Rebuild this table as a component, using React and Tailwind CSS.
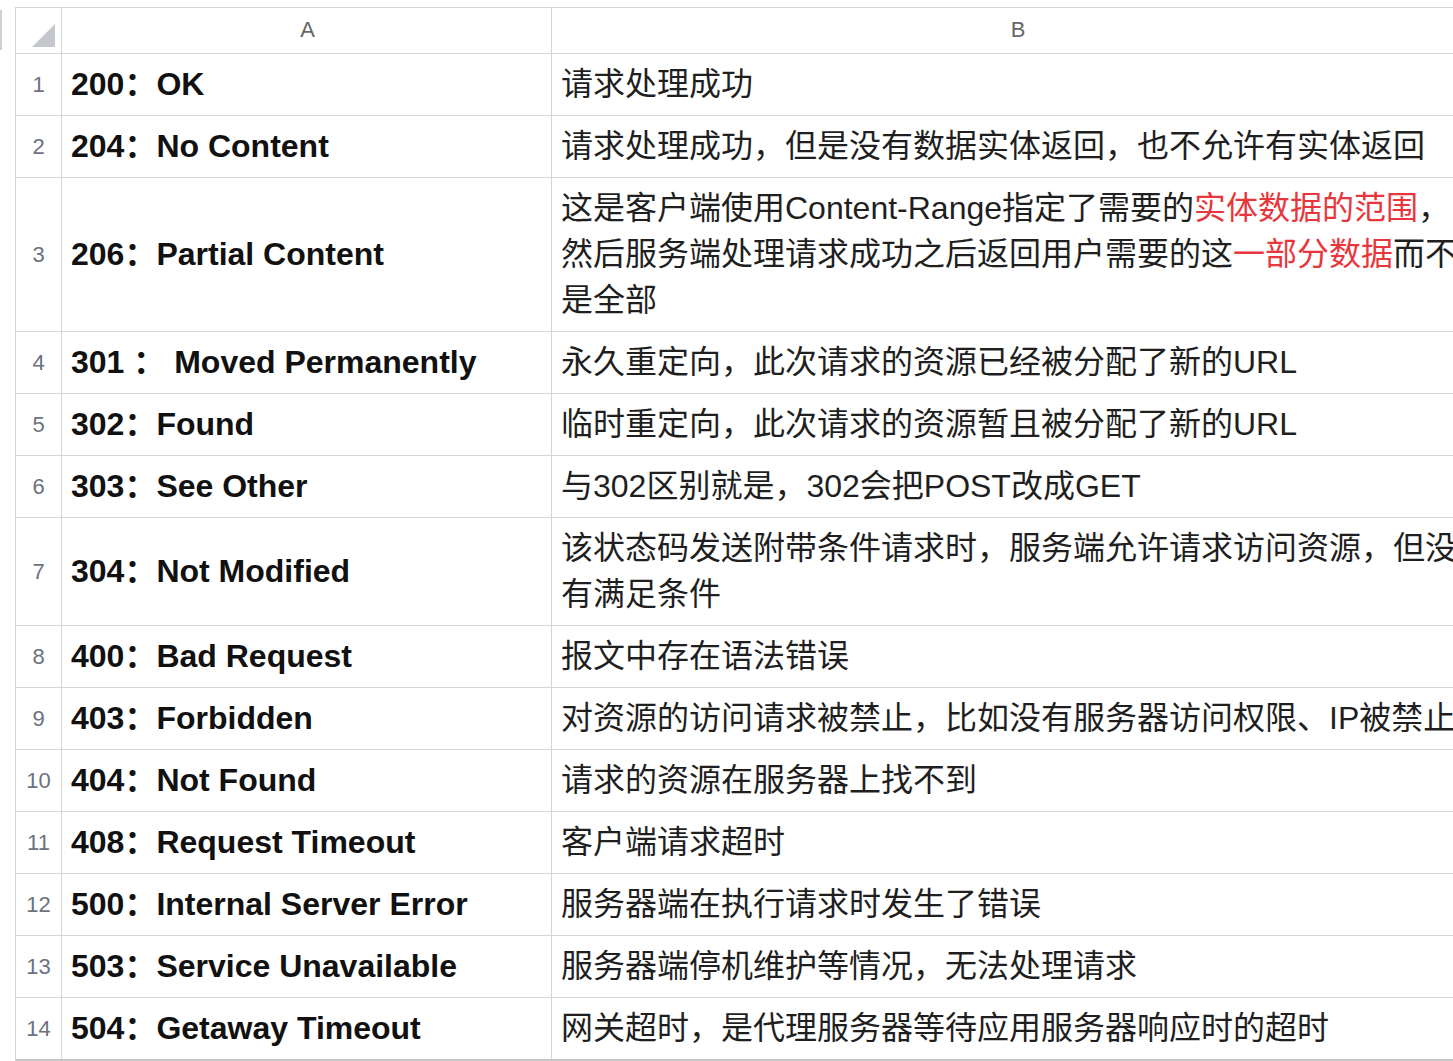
import React from 'react';

const rows = [
  { a: '200：OK', b: ['请求处理成功'] },
  { a: '204：No Content', b: ['请求处理成功，但是没有数据实体返回，也不允许有实体返回'] },
  {
    a: '206：Partial Content',
    b: [
      '这是客户端使用Content-Range指定了需要的',
      { red: '实体数据的范围' },
      '，然后服务端处理请求成功之后返回用户需要的这',
      { red: '一部分数据' },
      '而不是全部',
    ],
  },
  { a: '301 ： Moved Permanently', b: ['永久重定向，此次请求的资源已经被分配了新的URL'] },
  { a: '302：Found', b: ['临时重定向，此次请求的资源暂且被分配了新的URL'] },
  { a: '303：See Other', b: ['与302区别就是，302会把POST改成GET'] },
  { a: '304：Not Modified', b: ['该状态码发送附带条件请求时，服务端允许请求访问资源，但没有满足条件'] },
  { a: '400：Bad Request', b: ['报文中存在语法错误'] },
  { a: '403：Forbidden', b: ['对资源的访问请求被禁止，比如没有服务器访问权限、IP被禁止'] },
  { a: '404：Not Found', b: ['请求的资源在服务器上找不到'] },
  { a: '408：Request Timeout', b: ['客户端请求超时'] },
  { a: '500：Internal Server Error', b: ['服务器端在执行请求时发生了错误'] },
  { a: '503：Service Unavailable', b: ['服务器端停机维护等情况，无法处理请求'] },
  { a: '504：Getaway Timeout', b: ['网关超时，是代理服务器等待应用服务器响应时的超时'] },
];

export default function App() {
  return (
    <div className="w-[1453px] h-[1061px] overflow-hidden bg-white font-['Liberation_Sans','Noto_Sans_CJK_SC',sans-serif] flex">
      {/* stray pane edge at far left */}
      <div className="w-[2px] h-[40px] mt-[10px] bg-[#d0d0d0] shrink-0"></div>

      <div className="ml-[13px] mt-[7px] w-[1468px] shrink-0 border-l border-t border-[#d6d6d6] self-start">
        {/* header */}
        <div className="flex h-[46px] border-b border-[#d6d6d6]">
          <div className="w-[46px] shrink-0 border-r border-[#d6d6d6] flex items-end justify-end pr-[6px] pb-[6px]">
            <svg width="23" height="23" viewBox="0 0 23 23">
              <polygon points="23,0 23,23 0,23" fill="#c4c7cc" />
            </svg>
          </div>
          <div className="w-[490px] shrink-0 border-r border-[#d6d6d6] flex items-center justify-center pl-[2px] pb-[2px] text-[22px] text-[#666]">
            A
          </div>
          <div className="w-[932px] shrink-0 flex items-center justify-center pb-[2px] text-[22px] text-[#666]">
            B
          </div>
        </div>

        {rows.map((row, i) => (
          <div
            key={i}
            className={
              i === rows.length - 1
                ? 'flex border-b-2 border-[#c6c6c6]'
                : 'flex border-b border-[#d6d6d6]'
            }
          >
            <div className="w-[46px] shrink-0 border-r border-[#d6d6d6] flex items-center justify-center pb-[1px] text-[22px] text-[#6b7280]">
              {i + 1}
            </div>
            <div className="w-[490px] shrink-0 border-r border-[#d6d6d6] flex items-center pl-[9px] pb-[2px] text-[32px] font-bold text-[#111] whitespace-pre">
              {row.a}
            </div>
            <div className="w-[932px] shrink-0 pl-[9px] pr-[8px] pt-[7px] pb-[8px] text-[32px] leading-[46px] text-[#1f1f1f]">
              {row.b.map((part, j) =>
                typeof part === 'string' ? (
                  <span key={j}>{part}</span>
                ) : (
                  <span key={j} className="text-[#e8363c]">{part.red}</span>
                )
              )}
            </div>
          </div>
        ))}
      </div>
    </div>
  );
}
